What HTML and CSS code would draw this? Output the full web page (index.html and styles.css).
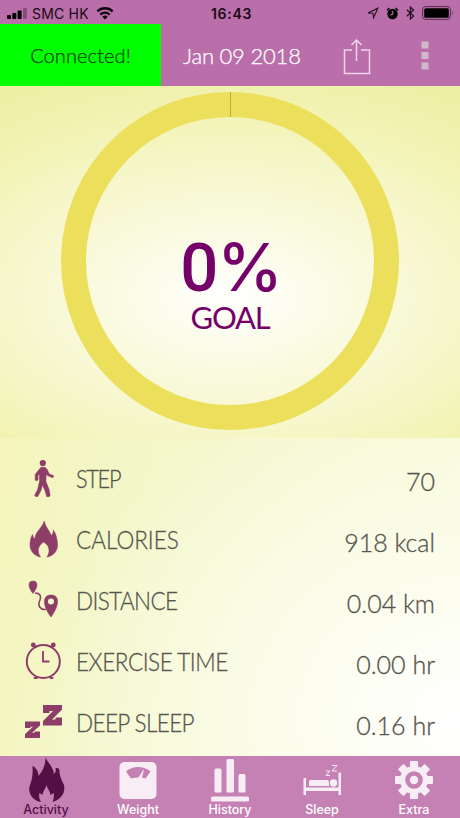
FILE: index.html
```html
<!DOCTYPE html>
<html lang="en">
<head>
<meta charset="utf-8">
<title>Activity</title>
<link rel="stylesheet" href="styles.css">
</head>
<body>
<main class="app">
  <div class="status">
    <div class="status-side">
      <svg class="signal" width="20" height="11" viewBox="0 0 20 11"><rect y="7" width="4" height="4" rx="1"/><rect x="5.3" y="5" width="4" height="6" rx="1"/><rect x="10.6" y="2.5" width="4" height="8.500" rx="1"/><rect x="16" width="4" height="11" rx="1" opacity=".28"/></svg>
      <span class="carrier">SMC HK</span>
      <svg class="wifi" width="18" height="13" viewBox="0 0 18 13"><path d="M9 12.500 6.300 9.700a3.900 3.900 0 0 1 5.400 0z"/><path d="M4.300 7.600a6.700 6.700 0 0 1 9.400 0M1.300 4.400a11 11 0 0 1 15.400 0" fill="none" stroke="#100810" stroke-width="2.300"/></svg>
    </div>
    <span class="clock">16:43</span>
    <div class="status-side status-right">
      <svg width="12" height="12" viewBox="0 0 12 12"><path d="M1 6 10.800 1.200 6.500 11 6 6.200z" fill="none" stroke="#201020" stroke-width="1.100"/></svg>
      <svg width="13" height="13" viewBox="0 0 13 13"><circle cx="6.500" cy="7" r="5.200"/><path d="M1 3.400 3.500 1M12 3.400 9.500 1" stroke="#100810" stroke-width="1.500"/><path d="M6.700 3.900v3.400L4.200 8" fill="none" stroke="#ba6eaa" stroke-width="1.100"/></svg>
      <svg width="9" height="14" viewBox="0 0 9 14"><path d="M.8 3.800 7.600 10 4.400 13V1L7.600 4 .8 10.200" fill="none" stroke="#201020" stroke-width="1.200"/></svg>
      <svg class="battery" width="32" height="14" viewBox="0 0 32 14"><rect x=".6" y=".6" width="27.800" height="12.800" rx="3" fill="none" stroke="#53304c"/><rect x="2.200" y="2.200" width="24.600" height="9.600" rx="1.500"/><path d="M30 4.500q1.700 2.500 0 5z" fill="#53304c"/></svg>
    </div>
  </div>
  <header class="toolbar">
    <div class="connected">Connected!</div>
    <div class="date">Jan 09 2018</div>
    <svg class="share" width="28" height="36" viewBox="0 0 28 36"><path d="M9 11H1.500v23.500h25V11H18M13.500 22V2M8.500 6l5-5 5 5" fill="none" stroke="#f1d6eb" stroke-width="1.500"/></svg>
    <svg class="more" width="8" height="29" viewBox="0 0 8 29"><path d="M.5.500h7v7h-7zM.5 11h7v7h-7zM.5 21.500h7v7h-7z" fill="#cdb9ca"/></svg>
  </header>
  <section class="goal">
    <div class="ring">
      <div class="ring-mark"></div>
      <div class="percent"><span class="digit">0</span>%</div>
      <div class="goal-label">GOAL</div>
    </div>
  </section>
  <section class="stats">
    <div class="row"><svg class="icon" viewBox="0 0 44 44"><circle cx="20.800" cy="6" r="3.100" stroke="none"/><path d="M19 10.200h4l2.200 2.300 2 4.400 4.200 1.700q.8 1.900-1.200 2l-4.800-2-1.200-2-.3 8 3.200 8 1 6q-.7 1.800-3.400 1l-1.700-6L20.500 28l-1.800 6-3 5.500q-2.300.7-3-1.300l3-5.700 1.800-8V17l-1.500 1.800V23q-1.400 1.400-2.800 0v-5.500z" stroke-linejoin="round"/></svg><span class="name n1">STEP</span><span class="value">70</span></div>
    <div class="row"><svg class="icon" viewBox="0 0 44 44"><path d="M22.300 3c1.500 7 5 9 7 14.500 1.800-1.700 2.300-3.500 2-5.500 3 4 3.800 9 4.200 14.500.4 6-4 11.500-10.500 12.500 4-6 2-12-3.500-15-5.500 4-7 9-3 15-6-1-10.500-6-10.500-12 0-4 .7-7 2.500-10.500.3 2 1 3.500 2.500 4.500 0-7 6.500-10 9.300-18z" stroke-linejoin="round"/></svg><span class="name n2">CALORIES</span><span class="value">918 kcal</span></div>
    <div class="row"><svg class="icon" viewBox="0 0 44 44"><path d="M11 14.500C6 8.500 5.500 2 11 2s5 6.500 0 12.500zM29 38C20.500 26.500 20 16 29 16s8.500 10.500 0 22z" stroke-linejoin="round"/><circle cx="29" cy="22.500" r="3" fill="#f5f8cc" stroke="none"/><path d="M13 14c5 0 6.500 3 5 7-3 6 .5 10 6 9.500" stroke-width="1.600"/></svg><span class="name n3">DISTANCE</span><span class="value">0.04 km</span></div>
    <div class="row"><svg class="icon" viewBox="0 0 44 44"><circle cx="21.300" cy="21.500" r="16.500" stroke-width="2" fill="none"/><path d="M21 11V21.500h6.500" stroke-width="1.800"/><path d="M15 38H12.500M28.500 38h2" stroke-width="2" stroke-linecap="round"/><circle cx="11.300" cy="5" r="2.400" stroke="none"/><circle cx="31.300" cy="5" r="2.400" stroke="none"/><path d="m12 5 2 3M31 5l-2 3" stroke-width="2"/></svg><span class="name n4">EXERCISE TIME</span><span class="value">0.00 hr</span></div>
    <div class="row"><svg class="icon" viewBox="0 0 44 44"><path d="M21 4h19v4.500L30 18.500h3.500v-2H40v8H21V20L31 10h-3.500v2H21zM3 20.500h15v4l-8 7.200h2.500v-1.200H18V37H3v-4l8-7.300H8.500v1.300H3z" stroke="none"/></svg><span class="name n5">DEEP SLEEP</span><span class="value">0.16 hr</span></div>
  </section>
  <nav class="tabs">
    <div class="tab active"><svg viewBox="0 0 46 48"><path d="M22.500 1.500c3 6 8 10 8.500 16.500 2-2 2-4 1.500-6 3.500 0 4 .5 4 4 .5 5 2 8 4.500 13 1.500 8-2.500 14-11.500 17 1-3 2-6 1-9l-3 2c-.5-4-3-6-4-10-1 4-3.500 6-4 10l-3-2c-1 4 0 6 1.500 9-8-1-14-9-11-17C9 24 10 19 9.500 10c4 2 6 6 6 10C21 13 22.500 8 22.500 1.500z" fill="#540f45"/></svg><span>Activity</span></div>
    <div class="tab"><svg viewBox="0 0 46 48"><rect x="4.500" y="6" width="37" height="37" rx="5"/><path d="M11 15.500c6-6 18-6 24.500 0l-5 7q-7-1.800-14.500 0z" fill="#c581b4"/><path d="m23 22 6-9-2 9z"/></svg><span>Weight</span></div>
    <div class="tab"><svg viewBox="0 0 46 48"><rect x="4" y="40.500" width="38" height="5" rx="1.500"/><rect x="7.500" y="12.500" width="7" height="24" rx="1.500"/><rect x="19.500" y="3" width="7.500" height="33.500" rx="1.500"/><rect x="31.500" y="18" width="7" height="18.500" rx="1.500"/></svg><span>History</span></div>
    <div class="tab"><svg viewBox="0 0 46 48"><path d="M4.500 22h2.500v9.500h32.500V16.500H42V39h-2.500v-4H7v4H4.500z"/><path d="M11 24h17q2 0 2 3v3H10v-4q0-2 1-2z"/><circle cx="34.500" cy="27" r="3.700"/><path d="M27 15h4l-4 4.500h4M33 9.500h5L33 15h5" fill="none" stroke="#f8edf5" stroke-width="1"/></svg><span>Sleep</span></div>
    <div class="tab"><svg viewBox="0 0 46 48"><rect x="19" y="5" width="8" height="38" rx="1"/><rect x="19" y="5" width="8" height="38" rx="1" transform="rotate(45 23 24)"/><rect x="19" y="5" width="8" height="38" rx="1" transform="rotate(90 23 24)"/><rect x="19" y="5" width="8" height="38" rx="1" transform="rotate(135 23 24)"/><circle cx="23" cy="24" r="14"/><circle cx="23" cy="24" r="6.500" fill="none" stroke="#c581b4" stroke-width="4.500"/></svg><span>Extra</span></div>
  </nav>
</main>
</body>
</html>
```
FILE: styles.css
```css
* { box-sizing: border-box; }
body { margin: 0; }
.app { width: 460px; height: 818px; overflow: hidden; display: flex; flex-direction: column; font-family: Inter, sans-serif; }
.status { height: 24px; background: #ba6eaa; display: grid; grid-template-columns: 1fr auto 1fr; align-items: center; padding: 2px 6px 0 7px; color: #160b14; }
.status-side { display: flex; align-items: center; }
.carrier { font-size: 14px; margin: 0 7px 0 5px; letter-spacing: .2px; }
.clock { font-size: 14px; font-weight: 600; letter-spacing: .7px; margin-left: 2px; }
.status-right { justify-content: flex-end; gap: 7px; }
.toolbar { height: 62px; background: #ba6eaa; display: flex; font-family: Lato, sans-serif; font-weight: 300; }
.connected { width: 161px; background: #00ff00; color: #093c09; font-size: 20px; line-height: 63px; text-align: center; letter-spacing: .1px; -webkit-text-stroke: .25px; }
.date { margin-left: 22px; width: 119px; white-space: nowrap; color: #fff; font-size: 22px; line-height: 63px; letter-spacing: -.2px; -webkit-text-stroke: .25px; }
.share { margin: 15px 0 0 41px; }
.more { margin: 17px 0 0 50px; }
.goal { height: 352px; padding-top: 6px; background: radial-gradient(ellipse 410px 235px at 50% 60%, #fff 0%, #fbfbe6 25%, #f6f7cb 55%, #f2f3b3 80%, #efefa7 100%); }
.ring { position: relative; width: 338px; height: 338px; margin: 0 auto; border: 25px solid #ebdf5c; border-radius: 50%; color: #750069; text-align: center; padding-top: 116px; }
.ring-mark { position: absolute; top: -25px; left: 144px; width: 1px; height: 25px; background: #bcae3c; }
.percent { font: 500 66px/68px Inter, sans-serif; letter-spacing: -4px; margin-left: -1px; }
.digit { font-family: Roboto, sans-serif; font-size: 67px; letter-spacing: -1px; }
.goal-label { font: 400 31px/30px Lato, sans-serif; letter-spacing: -1.200px; }
.stats { height: 318px; padding: 10px 25px 0 22px; background: radial-gradient(ellipse 420px 360px at 100% 88%, #fff 0%, #fbfce8 50%, rgba(247,249,215,0) 100%), linear-gradient(100deg, #f5f4bc, #f3f7c8 25%, #f7f9d7); }
.row { height: 61px; display: flex; align-items: center; color: #55554d; font: 300 25px/61px Lato, sans-serif; -webkit-text-stroke: .3px; }
.icon { width: 44px; height: 44px; fill: #8e3c68; stroke: #8e3c68; stroke-width: .6px; }
.icon path[stroke-width] { fill: none; }
.name { margin-left: 10px; white-space: nowrap; transform: scaleX(.9); transform-origin: left; }
.n1 { letter-spacing: -1.500px; transform: scaleX(.87); }
.n2 { letter-spacing: 0; }
.n3 { letter-spacing: -.7px; }
.n4 { letter-spacing: -.5px; }
.n5 { letter-spacing: -.7px; }
.value { margin-left: auto; padding-top: 5px; white-space: nowrap; }
.tabs { height: 62px; background: #c581b4; display: grid; grid-template-columns: repeat(5, 92px); font: 500 12.500px/15px Inter, sans-serif; color: #fff; }
.tab { display: flex; flex-direction: column; align-items: center; letter-spacing: 0; }
.tab svg { width: 46px; height: 48px; margin-bottom: -2px; fill: #f8edf5; }
.active { color: #540f45; }
```
